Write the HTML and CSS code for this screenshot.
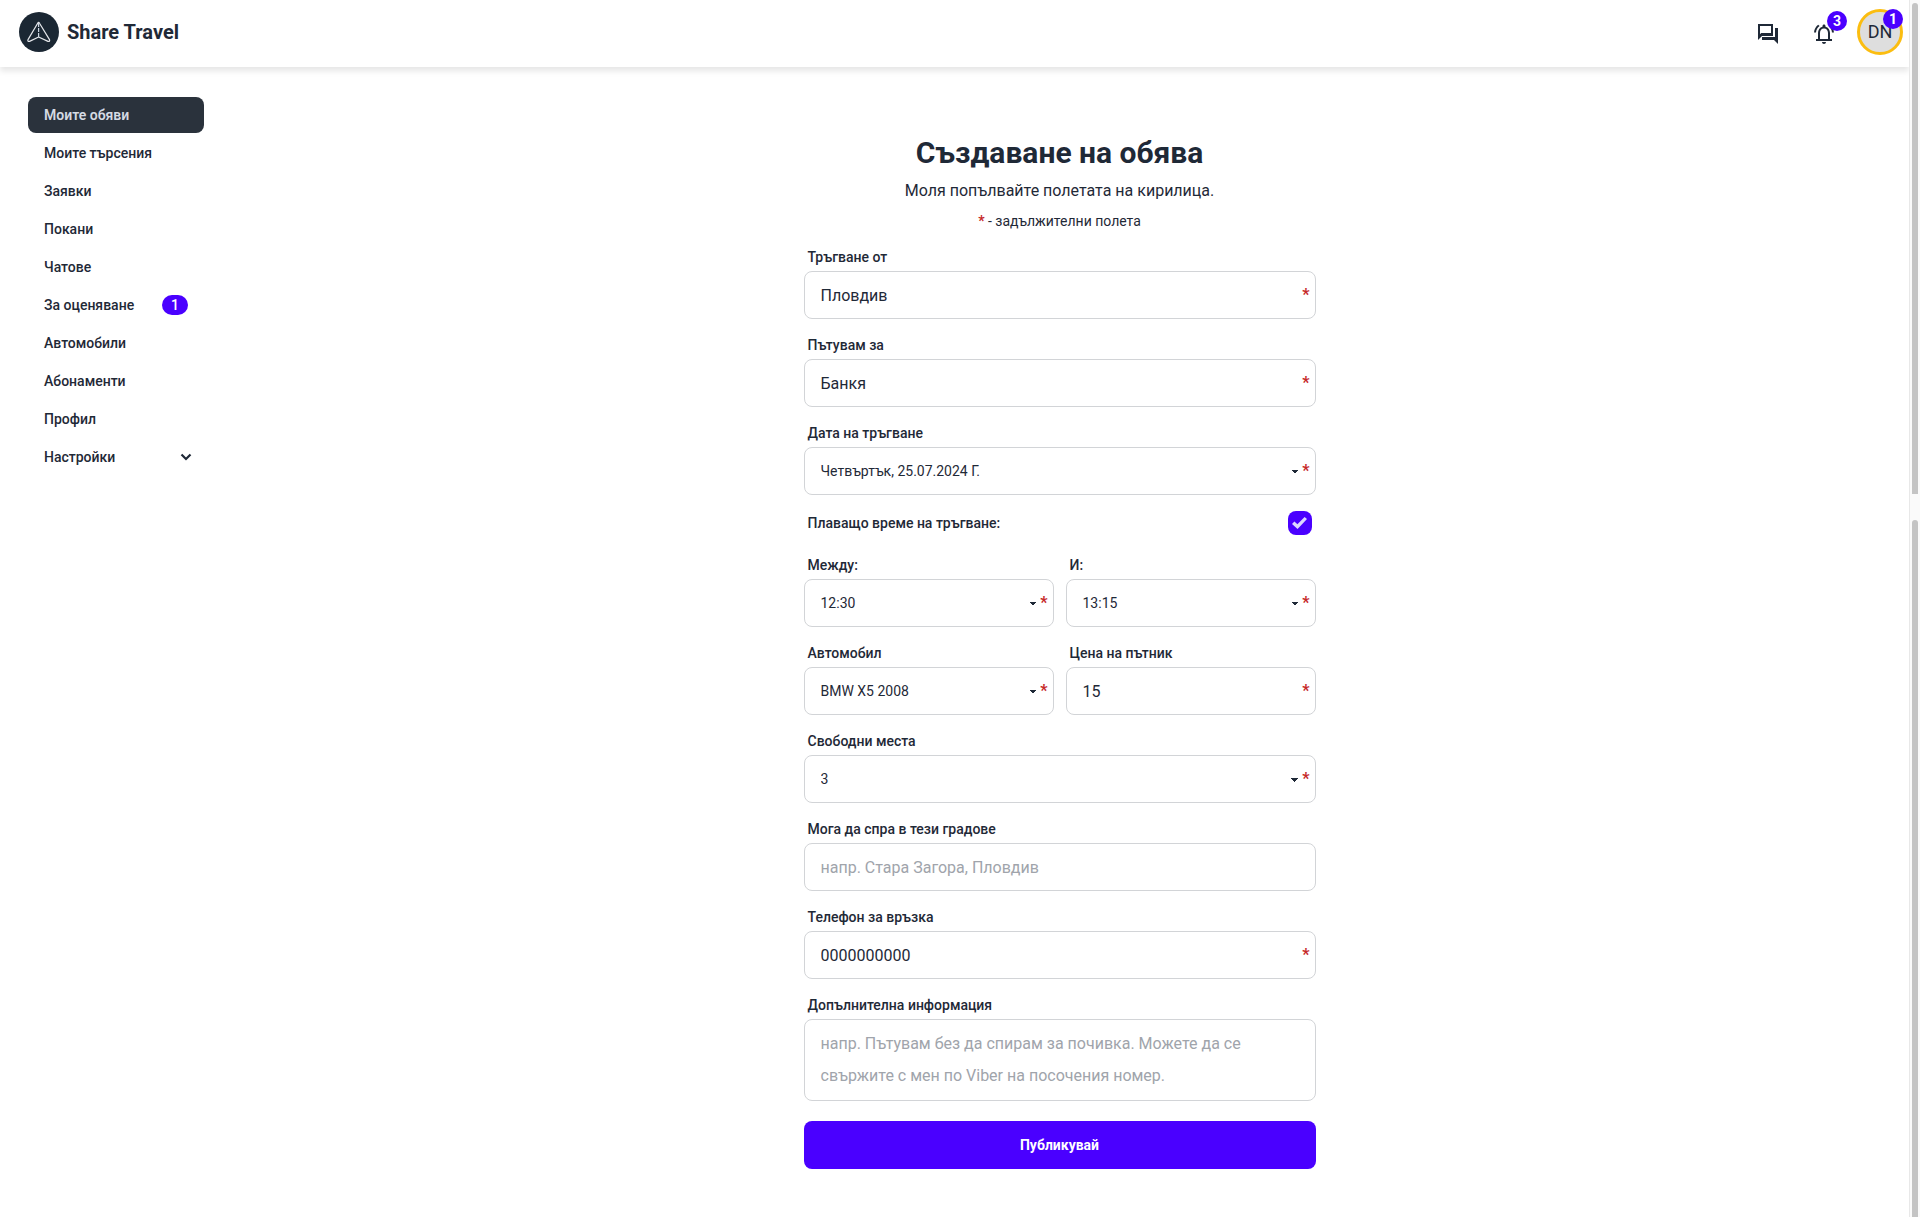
FILE: index.html
```html
<!DOCTYPE html>
<html lang="bg">
<head>
<meta charset="utf-8">
<meta name="viewport" content="width=device-width, initial-scale=1">
<title>Share Travel</title>
<link rel="stylesheet" href="styles.css">
</head>
<body>
<div class="app">
  <div class="page">
    <header class="topbar">
      <a class="brand" href="#">
        <svg class="brand-logo" viewBox="0 0 40 40" aria-hidden="true">
          <circle cx="20" cy="20" r="20" fill="#1b2733"/>
          <path d="M18.700 11.200Q19.600 9.600 20.500 11.200L30.500 27.600Q31.200 29.800 29 29.400L19.600 25L10.600 29.400Q8.200 29.800 9 27.600Z" fill="none" stroke="#e5e7eb" stroke-width="1.200" stroke-linejoin="round"/>
          <path d="M19.600 11V25" fill="none" stroke="#cbd5e1" stroke-width="1.200" stroke-dasharray="4 1"/>
        </svg>
        <span>Share Travel</span>
      </a>
      <nav class="actions">
        <button class="icon-button" type="button" aria-label="Чатове">
          <svg viewBox="0 0 24 24" width="24" height="24"><path fill="currentColor" d="M15 4v7H5.170L4 12.170V4h11m2-2H2v16l4-4h11V2zm5 4h-3v9H6v3h12l4 4V6z"/></svg>
        </button>
        <button class="icon-button" type="button" aria-label="Известия">
          <svg viewBox="0 0 24 24" width="24" height="24"><path fill="currentColor" d="M12 22c1.100 0 2-.9 2-2h-4c0 1.100.9 2 2 2zm6-5v-6c0-3.070-1.630-5.640-4.500-6.320V4c0-.83-.67-1.500-1.500-1.500s-1.500.67-1.500 1.500v.68C7.640 5.360 6 7.920 6 11v6H4v2h16v-2h-2zm-2 0H8v-6c0-2.480 1.510-4.500 4-4.500s4 2.020 4 4.500v6zM7.580 4.080L6.150 2.650C3.750 4.480 2.170 7.300 2.030 10.500h2c.15-2.650 1.510-4.970 3.550-6.420zm12.390 6.420h2c-.15-3.200-1.730-6.020-4.120-7.850l-1.420 1.430c2.020 1.450 3.390 3.770 3.540 6.420z"/></svg>
          <span class="count">3</span>
        </button>
        <button class="avatar" type="button">DN<span class="count">1</span></button>
      </nav>
    </header>

    <div class="content">
      <aside class="sidebar">
        <nav class="menu">
          <a class="menu-item active" href="#">Моите обяви</a>
          <a class="menu-item" href="#">Моите търсения</a>
          <a class="menu-item" href="#">Заявки</a>
          <a class="menu-item" href="#">Покани</a>
          <a class="menu-item" href="#">Чатове</a>
          <a class="menu-item" href="#">За оценяване <span class="pill">1</span></a>
          <a class="menu-item" href="#">Автомобили</a>
          <a class="menu-item" href="#">Абонаменти</a>
          <a class="menu-item" href="#">Профил</a>
          <a class="menu-item expandable" href="#">Настройки
            <svg viewBox="0 0 12 8" width="12" height="8" aria-hidden="true"><path d="M1.500 1.500L6 6L10.500 1.500" fill="none" stroke="currentColor" stroke-width="2.200"/></svg>
          </a>
        </nav>
      </aside>

      <main class="main">
        <form class="form">
          <div class="intro">
            <h1>Създаване на обява</h1>
            <p class="lead">Моля попълвайте полетата на кирилица.</p>
            <p class="hint"><span class="star">*</span> - задължителни полета</p>
          </div>

          <div class="field">
            <label for="from">Тръгване от</label>
            <div class="control required"><input id="from" type="text" value="Пловдив"></div>
          </div>
          <div class="field">
            <label for="to">Пътувам за</label>
            <div class="control required"><input id="to" type="text" value="Банкя"></div>
          </div>
          <div class="field">
            <label for="date">Дата на тръгване</label>
            <div class="control required"><select id="date"><option>Четвъртък, 25.07.2024 Г.</option></select></div>
          </div>
          <div class="check-row">
            <label for="floating">Плаващо време на тръгване:</label>
            <input id="floating" type="checkbox" checked>
          </div>
          <div class="pair">
            <div class="field">
              <label for="after">Между:</label>
              <div class="control required"><select id="after"><option>12:30</option></select></div>
            </div>
            <div class="field">
              <label for="before">И:</label>
              <div class="control required"><select id="before"><option>13:15</option></select></div>
            </div>
          </div>
          <div class="pair">
            <div class="field">
              <label for="car">Автомобил</label>
              <div class="control required"><select id="car"><option>BMW X5 2008</option></select></div>
            </div>
            <div class="field">
              <label for="price">Цена на пътник</label>
              <div class="control required"><input id="price" type="text" value="15"></div>
            </div>
          </div>
          <div class="field">
            <label for="seats">Свободни места</label>
            <div class="control required"><select id="seats"><option>3</option></select></div>
          </div>
          <div class="field">
            <label for="stops">Мога да спра в тези градове</label>
            <div class="control"><input id="stops" type="text" placeholder="напр. Стара Загора, Пловдив"></div>
          </div>
          <div class="field">
            <label for="phone">Телефон за връзка</label>
            <div class="control required"><input id="phone" type="tel" value="0000000000"></div>
          </div>
          <div class="field">
            <label for="info">Допълнителна информация</label>
            <div class="control"><textarea id="info" rows="2" placeholder="напр. Пътувам без да спирам за почивка. Можете да се свържите с мен по Viber на посочения номер."></textarea></div>
          </div>
          <button class="submit" type="submit">Публикувай</button>
        </form>
      </main>
    </div>
  </div>
  <div class="scrollbar" aria-hidden="true"><span class="thumb upper"></span><span class="thumb lower"></span></div>
</div>
</body>
</html>
```

FILE: styles.css
```css
:root {
  --ink: #1f2937;
  --primary: #4a00ff;
  --line: #d2d4d7;
}

* { box-sizing: border-box; }

body {
  margin: 0;
  background: #fff;
  color: var(--ink);
  font: 14px/20px Roboto, "Noto Sans", sans-serif;
}

a { color: inherit; text-decoration: none; }
button, input, select, textarea { font: inherit; color: inherit; }
h1, p { margin: 0; }

.app { display: flex; min-height: 100vh; }
.page { flex: 1; min-width: 0; }

.topbar {
  display: flex;
  align-items: center;
  justify-content: space-between;
  height: 67px;
  padding: 0 6px 3px 19px;
  box-shadow: 0 4px 6px rgba(0, 0, 0, .1);
}
.brand {
  display: flex;
  align-items: center;
  gap: 8px;
  font-size: 20px;
  line-height: 28px;
  font-weight: 700;
}
.brand-logo { width: 40px; height: 40px; }

.actions { display: flex; align-items: center; gap: 8px; }
.icon-button, .avatar {
  position: relative;
  display: grid;
  place-items: center;
  width: 48px;
  height: 48px;
  padding: 0;
  border: 0;
  background: none;
}
.icon-button { padding-top: 4px; }
.avatar {
  width: 46px;
  height: 46px;
  margin-left: 1px;
  border: 3px solid #fbbd10;
  border-radius: 50%;
  background: #dedede;
  font-size: 18px;
}
.count {
  position: absolute;
  top: 3px;
  right: 1px;
  width: 20px;
  height: 20px;
  border-radius: 10px;
  background: var(--primary);
  color: #fff;
  font-size: 14px;
  font-weight: 700;
  text-align: center;
}
.avatar .count { top: -3px; right: -3px; }

.content { display: flex; }
.sidebar { width: 210px; padding: 30px 6px 0 28px; }
.menu { display: grid; gap: 2px; }
.menu-item {
  display: flex;
  align-items: center;
  justify-content: space-between;
  height: 36px;
  padding: 0 16px;
  border-radius: 8px;
  font-weight: 500;
}
.menu-item.active { background: #2a323c; color: #d5dae3; font-weight: 600; }
.menu-item.expandable { padding-right: 12px; }
.pill {
  width: 26px;
  border-radius: 10px;
  background: var(--primary);
  color: #fff;
  text-align: center;
}

.main {
  flex: 1;
  display: flex;
  justify-content: center;
  padding: 64px 16px 48px;
}
.form {
  display: flex;
  flex-direction: column;
  gap: 16px;
  width: 512px;
}
.intro { display: grid; justify-items: center; }
h1 { font-size: 30px; line-height: 44px; font-weight: 700; }
.lead { font-size: 16px; line-height: 32px; }
.hint { padding-top: 4px; }
.star { color: #c62828; font-weight: 700; }

.field { display: grid; gap: 4px; }
.field label, .check-row label { padding: 0 4px; font-weight: 500; }
.pair { display: grid; grid-template-columns: 1fr 1fr; gap: 12px; }

.control { position: relative; display: grid; }
.control.required::after {
  content: "*";
  position: absolute;
  top: 14px;
  right: 6px;
  color: #c62828;
  font-size: 16px;
  font-weight: 700;
}
.control input, .control select, .control textarea {
  width: 100%;
  height: 48px;
  padding: 0 16px;
  border: 1px solid var(--line);
  border-radius: 8px;
  background-color: #fff;
  font-size: 16px;
}
.control select {
  appearance: none;
  font-size: 14px;
  background-image:
    linear-gradient(45deg, transparent 50%, var(--ink) 50%),
    linear-gradient(135deg, var(--ink) 50%, transparent 50%);
  background-size: 4px 4px;
  background-repeat: no-repeat;
  background-position: right 20px top 22px, right 16px top 22px;
}
.control textarea {
  height: 82px;
  padding: 8px 16px;
  line-height: 32px;
  resize: none;
}
.control ::placeholder { color: #a0a4ab; opacity: 1; }

.check-row {
  display: flex;
  align-items: center;
  justify-content: space-between;
  padding: 0 4px 4px 0;
}
.check-row input {
  appearance: none;
  display: grid;
  place-items: center;
  width: 24px;
  height: 24px;
  margin: 0;
  border-radius: 8px;
  background: var(--primary);
}
.check-row input:checked::before {
  content: "";
  width: 15px;
  height: 12px;
  background: #dcd5ff;
  clip-path: polygon(0 58%, 16% 38%, 36% 60%, 84% 0, 100% 17%, 37% 100%);
}

.submit {
  height: 48px;
  margin-top: 4px;
  border: 0;
  border-radius: 8px;
  background: var(--primary);
  color: #fff;
  font-weight: 700;
}

.scrollbar {
  display: flex;
  flex-direction: column;
  gap: 26px;
  width: 11px;
  padding: 3px 2px 0;
  border-left: 1px solid #e8e8e8;
  background: #fafafa;
}
.thumb { border-radius: 4px 4px 0 0; background: #c4c4c4; }
.thumb.upper { flex: 491; }
.thumb.lower { flex: 697; }
```
